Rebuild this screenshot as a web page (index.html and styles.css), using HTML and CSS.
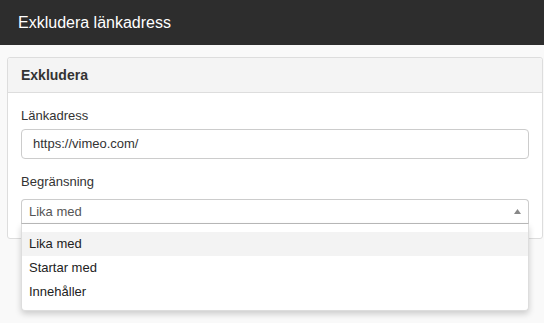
FILE: index.html
```html
<!DOCTYPE html>
<html lang="sv">
<head>
<meta charset="utf-8">
<title>Exkludera länkadress</title>
<link rel="stylesheet" href="styles.css">
</head>
<body>
<header class="topbar">Exkludera länkadress</header>
<section class="panel">
  <div class="panel-heading">Exkludera</div>
  <div class="panel-body">
    <label class="field-label">Länkadress</label>
    <div class="input">https://vimeo.com/</div>
    <label class="field-label second">Begränsning</label>
    <div class="select-wrap">
      <div class="select">
        <span>Lika med</span>
        <svg class="arrow" width="7" height="5" viewBox="0 0 7 5"><path d="M3.5 0 L7 5 L0 5 Z" fill="#888"/></svg>
      </div>
      <ul class="dropdown">
        <li class="active">Lika med</li>
        <li>Startar med</li>
        <li>Innehåller</li>
      </ul>
    </div>
  </div>
</section>
</body>
</html>
```

FILE: styles.css
```css
* { box-sizing: border-box; }
html, body { margin: 0; padding: 0; overflow: visible; }
body {
  background: #f9f9f9;
  font-family: "Liberation Sans", Arial, sans-serif;
  color: #333;
  font-size: 13px;
  min-height: 323px;
}
.topbar {
  height: 45px;
  background: #2d2d2d;
  color: #fff;
  font-size: 16px;
  line-height: 45px;
  padding-left: 18px;
}
.panel {
  position: relative;
  overflow: visible;
  margin: 12px 1px 0 7px;
  background: #fff;
  border: 1px solid #ddd;
  border-radius: 3px;
}
.panel-heading {
  height: 35px;
  line-height: 34px;
  background: #f4f4f4;
  border-bottom: 1px solid #ddd;
  padding-left: 13px;
  font-weight: bold;
  font-size: 14px;
  color: #333;
  border-radius: 3px 3px 0 0;
}
.panel-body {
  overflow: visible;
  padding: 14px 13px 14px 13px;
}
.field-label {
  display: block;
  line-height: 18px;
  margin-bottom: 4px;
  color: #333;
}
.field-label.second { margin-top: 14px; margin-bottom: 8px; }
.input {
  height: 30px;
  line-height: 28px;
  border: 1px solid #ccc;
  border-radius: 4px;
  padding-left: 11px;
  color: #333;
}
.select-wrap { position: relative; overflow: visible; z-index: 5; }
.select {
  height: 25px;
  border: 1px solid #ccc;
  border-bottom-color: #bbb;
  border-radius: 4px 4px 0 0;
  display: flex;
  align-items: center;
  justify-content: space-between;
  padding: 0 7px 0 7px;
  color: #555;
}
.arrow { margin-bottom: 1px; }
.dropdown {
  position: absolute;
  left: 0;
  right: 0;
  top: 25px;
  height: 87px;
  margin: 0;
  padding: 8px 0 7px;
  list-style: none;
  background: #fff;
  border: 1px solid #ddd;
  border-top: none;
  border-radius: 0 0 4px 4px;
  box-shadow: 0 3px 6px rgba(0,0,0,0.18);
  z-index: 10;
  overflow: visible;
}
.dropdown li {
  height: 24px;
  line-height: 24px;
  padding-left: 7px;
  color: #222;
}
.dropdown li.active { background: #f3f3f3; }
```
